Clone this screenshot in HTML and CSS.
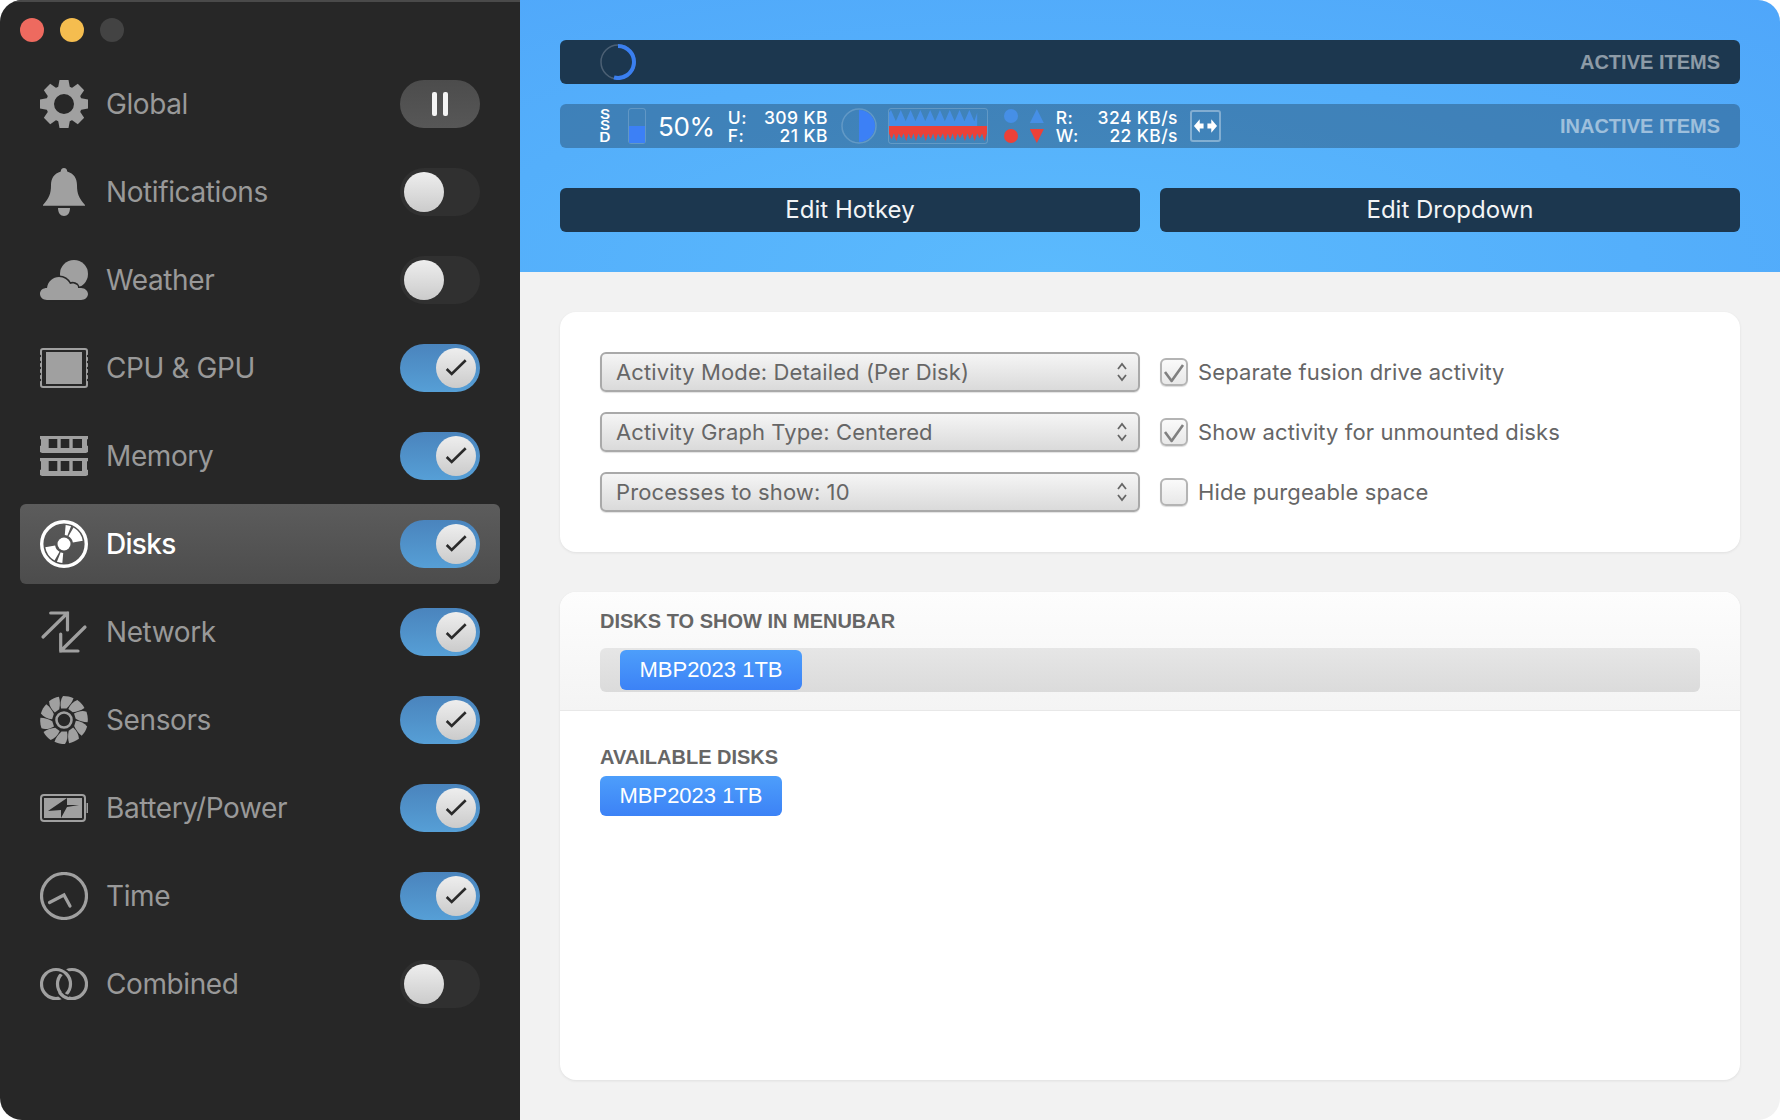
FILE: index.html
```html
<!DOCTYPE html>
<html lang="en">
<head>
    <meta charset="UTF-8">
    <title>Disks - Preferences</title>
    <link rel="stylesheet" href="styles.css">
</head>
<body>
<div class="window">
    <aside class="sidebar">
        <div class="traffic">
            <span class="light light-close"></span>
            <span class="light light-min"></span>
            <span class="light light-off"></span>
        </div>
        <nav class="nav">
            <div class="nav-item">
                <svg class="nav-icon" viewBox="0 0 48 48">
                    <defs><path id="tooth" d="M19.5 0h9l1.5 8h-12z"/></defs>
                    <circle cx="24" cy="24" r="14" fill="none" stroke="currentColor" stroke-width="8"/>
                    <use href="#tooth"/>
                    <use href="#tooth" transform="rotate(45 24 24)"/>
                    <use href="#tooth" transform="rotate(90 24 24)"/>
                    <use href="#tooth" transform="rotate(135 24 24)"/>
                    <use href="#tooth" transform="rotate(180 24 24)"/>
                    <use href="#tooth" transform="rotate(225 24 24)"/>
                    <use href="#tooth" transform="rotate(270 24 24)"/>
                    <use href="#tooth" transform="rotate(315 24 24)"/>
                </svg>
                <span class="nav-label">Global</span>
                <div class="pause"><span></span><span></span></div>
            </div>
            <div class="nav-item">
                <svg class="nav-icon" viewBox="0 0 48 48">
                    <path d="M24 0c-2 0-3.200 1.300-3.200 3.500C14 5.500 11 10.500 11 17c0 9-2 13-8 20l0 .8h42V37c-6-7-8-11-8-20 0-6.500-3-11.500-9.800-13.500C27.200 1.300 26 0 24 0z"/>
                    <path d="M18 40h12c0 5-2.500 8-6 8s-6-3-6-8z"/>
                </svg>
                <span class="nav-label">Notifications</span>
                <div class="toggle"><span class="knob"></span></div>
            </div>
            <div class="nav-item">
                <svg class="nav-icon" viewBox="0 0 48 48">
                    <circle cx="34" cy="18" r="14"/>
                    <path class="cloud" d="M7 44C3 44 0 41 0 38c0-4 3-6 7-6 1-7 6-11 12-11 5 0 9 3 11 7 2-1 5-.5 7 1 1 1 1 2 1 3h3c4 0 7 3 7 6s-3 6-7 6z"/>
                </svg>
                <span class="nav-label">Weather</span>
                <div class="toggle"><span class="knob"></span></div>
            </div>
            <div class="nav-item">
                <svg class="nav-icon" viewBox="0 0 48 48">
                    <rect x="1" y="5" width="46" height="38" rx="2" fill="none" stroke="currentColor" stroke-width="2"/>
                    <rect x="6" y="8" width="36" height="32"/>
                    <g class="notches">
                        <circle cx="0" cy="12" r="1.200"/><circle cx="0" cy="18" r="1.200"/><circle cx="0" cy="24" r="1.200"/><circle cx="0" cy="30" r="1.200"/><circle cx="0" cy="36" r="1.200"/>
                        <circle cx="48" cy="12" r="1.200"/><circle cx="48" cy="18" r="1.200"/><circle cx="48" cy="24" r="1.200"/><circle cx="48" cy="30" r="1.200"/><circle cx="48" cy="36" r="1.200"/>
                    </g>
                </svg>
                <span class="nav-label">CPU &amp; GPU</span>
                <div class="toggle toggle-on"><span class="knob"><svg viewBox="0 0 40 40"><path d="M10.700 21l5 5 14-13.700"/></svg></span></div>
            </div>
            <div class="nav-item">
                <svg class="nav-icon" viewBox="0 0 48 48">
                    <path fill-rule="evenodd" d="M0 4h48v3l-1 .5v6l1 .5v6l-2 1H2l-2-1v-6l1-.5v-6L0 7zM8.700 7v9h8.600V7zm12 0v9h8.600V7zm12 0v9H42V7z"/>
                    <path fill-rule="evenodd" d="M0 26h48v3l-1 .5v8l1 .5v5l-2 1H2l-2-1v-5l1-.5v-8L0 29zM8.700 29v10h8.600V29zm12 0v10h8.600V29zm12 0v10H42V29z"/>
                </svg>
                <span class="nav-label">Memory</span>
                <div class="toggle toggle-on"><span class="knob"><svg viewBox="0 0 40 40"><path d="M10.700 21l5 5 14-13.700"/></svg></span></div>
            </div>
            <div class="nav-item nav-item-active">
                <svg class="nav-icon" viewBox="0 0 48 48">
                    <circle cx="24" cy="24" r="22.300" fill="none" stroke="currentColor" stroke-width="3.400"/>
                    <circle cx="24" cy="24" r="14" fill="none" stroke="currentColor" stroke-width="10" pathLength="360" stroke-dasharray="17 8 50 105" transform="rotate(-85 24 24)"/>
                    <circle cx="24" cy="24" r="6.500"/>
                </svg>
                <span class="nav-label">Disks</span>
                <div class="toggle toggle-on"><span class="knob"><svg viewBox="0 0 40 40"><path d="M10.700 21l5 5 14-13.700"/></svg></span></div>
            </div>
            <div class="nav-item">
                <svg class="nav-icon nav-icon-line" viewBox="0 0 48 48">
                    <path d="M3 29L27.500 5M10.700 5h16.800v17M45 19L20.700 43M38 43H20.700V26"/>
                </svg>
                <span class="nav-label">Network</span>
                <div class="toggle toggle-on"><span class="knob"><svg viewBox="0 0 40 40"><path d="M10.700 21l5 5 14-13.700"/></svg></span></div>
            </div>
            <div class="nav-item">
                <svg class="nav-icon" viewBox="0 0 48 48">
                    <defs><path id="blade" d="M21 12.500C20 8 20.500 3.500 23 0c4 0 7.500.7 10.500 2.300-1.300 4-4 7.500-7 10.200z"/></defs>
                    <use href="#blade"/>
                    <use href="#blade" transform="rotate(36 24 24)"/>
                    <use href="#blade" transform="rotate(72 24 24)"/>
                    <use href="#blade" transform="rotate(108 24 24)"/>
                    <use href="#blade" transform="rotate(144 24 24)"/>
                    <use href="#blade" transform="rotate(180 24 24)"/>
                    <use href="#blade" transform="rotate(216 24 24)"/>
                    <use href="#blade" transform="rotate(252 24 24)"/>
                    <use href="#blade" transform="rotate(288 24 24)"/>
                    <use href="#blade" transform="rotate(324 24 24)"/>
                    <circle cx="24" cy="24" r="7.500" fill="none" stroke="currentColor" stroke-width="2.600"/>
                </svg>
                <span class="nav-label">Sensors</span>
                <div class="toggle toggle-on"><span class="knob"><svg viewBox="0 0 40 40"><path d="M10.700 21l5 5 14-13.700"/></svg></span></div>
            </div>
            <div class="nav-item">
                <svg class="nav-icon" viewBox="0 0 48 48">
                    <rect x="1" y="11" width="44" height="26" rx="3" fill="none" stroke="currentColor" stroke-width="2"/>
                    <rect x="46.500" y="19" width="1.500" height="10"/>
                    <path fill-rule="evenodd" d="M4 14h38v20H4zM39 21l-12 2-6 11v-8L8 27l19-13v7z"/>
                </svg>
                <span class="nav-label">Battery/Power</span>
                <div class="toggle toggle-on"><span class="knob"><svg viewBox="0 0 40 40"><path d="M10.700 21l5 5 14-13.700"/></svg></span></div>
            </div>
            <div class="nav-item">
                <svg class="nav-icon nav-icon-line" viewBox="0 0 48 48">
                    <circle cx="24" cy="24" r="22.500"/>
                    <path d="M9.500 30.500L24 23l6 11"/>
                </svg>
                <span class="nav-label">Time</span>
                <div class="toggle toggle-on"><span class="knob"><svg viewBox="0 0 40 40"><path d="M10.700 21l5 5 14-13.700"/></svg></span></div>
            </div>
            <div class="nav-item">
                <svg class="nav-icon nav-icon-line" viewBox="0 0 48 48">
                    <circle cx="32" cy="24" r="14.500"/>
                    <circle class="ring-cut" cx="16" cy="24" r="14.500"/>
                    <circle cx="16" cy="24" r="14.500"/>
                    <path class="ring-cut" d="M20 33A15 15 0 0 0 28 38.460"/>
                    <path d="M20 33A15 15 0 0 0 28 38.460"/>
                </svg>
                <span class="nav-label">Combined</span>
                <div class="toggle"><span class="knob"></span></div>
            </div>
        </nav>
    </aside>

    <main class="main">
        <section class="hero">
            <div class="bar bar-active">
                <svg class="spinner" viewBox="0 0 36 36">
                    <circle class="spinner-track" cx="18" cy="18" r="17"/>
                    <path class="spinner-arc" d="M18 2A16 16 0 1 1 14 33.500"/>
                </svg>
                <span class="bar-label">ACTIVE ITEMS</span>
            </div>
            <div class="bar bar-inactive">
                <span class="ssd">SSD</span>
                <div class="level"><div class="level-fill"></div></div>
                <span class="percent">50%</span>
                <div class="stats stats-disk">
                    <span>U:</span><span class="stat-num">309 KB</span>
                    <span>F:</span><span class="stat-num">21 KB</span>
                </div>
                <svg class="pie" viewBox="0 0 36 36">
                    <circle cx="18" cy="18" r="17"/>
                    <path d="M18 2a16 16 0 0 1 0 32z"/>
                </svg>
                <svg class="graph" viewBox="0 0 100 36" preserveAspectRatio="none">
                    <path class="graph-read" d="M0 18V4l2-3 5 12 5-12 5 12 5-12 5 12 5-12 5 12 5-12 5 12 5-12 5 12 5-12 5 12 5-12 5 12 5-12 5 12 3-9v14z"/>
                    <path class="graph-write" d="M0 18h100v8l-2.500 8-2.500-8-2.500 5-2.500-5-2.500 8-2.500-8-2.500 6-2.500-6-2.500 8-2.500-8-2.500 5-2.500-5-2.500 8-2.500-8-2.500 6-2.500-6-2.500 8-2.500-8-2.500 5-2.500-5-2.500 8-2.500-8-2.500 6-2.500-6-2.500 8-2.500-8-2.500 5-2.500-5-2.500 8-2.500-8-2.500 6-2.500-6-2.500 8-2.500-8-2.500 5-2.500-5-2.500 8-2.500-8-2.500 6-2.500-6-2.500 8-2.500-8-2.500 5-2.500-5z"/>
                </svg>
                <div class="io">
                    <span class="dot dot-read"></span>
                    <span class="tri tri-up"></span>
                    <span class="dot dot-write"></span>
                    <span class="tri tri-down"></span>
                </div>
                <div class="stats stats-io">
                    <span>R:</span><span class="stat-num">324 KB/s</span>
                    <span>W:</span><span class="stat-num">22 KB/s</span>
                </div>
                <div class="spacer-box">
                    <svg viewBox="0 0 26 26"><path d="M1 13l6-7v4.500h4v5H7V20zM25 13l-6-7v4.500h-4v5h4V20z"/></svg>
                </div>
                <span class="bar-label">INACTIVE ITEMS</span>
            </div>
            <div class="hero-buttons">
                <div class="hero-btn">Edit Hotkey</div>
                <div class="hero-btn">Edit Dropdown</div>
            </div>
        </section>

        <section class="content">
            <div class="card card-options">
                <div class="select">
                    <span>Activity Mode: Detailed (Per Disk)</span>
                    <svg viewBox="0 0 12 22"><path d="M2 8l4-5 4 5M2 14l4 5 4-5"/></svg>
                </div>
                <label class="check"><span class="box"><svg viewBox="0 0 20 20"><path d="M1 10l6.600 9L19 3"/></svg></span>Separate fusion drive activity</label>
                <div class="select">
                    <span>Activity Graph Type: Centered</span>
                    <svg viewBox="0 0 12 22"><path d="M2 8l4-5 4 5M2 14l4 5 4-5"/></svg>
                </div>
                <label class="check"><span class="box"><svg viewBox="0 0 20 20"><path d="M1 10l6.600 9L19 3"/></svg></span>Show activity for unmounted disks</label>
                <div class="select">
                    <span>Processes to show: 10</span>
                    <svg viewBox="0 0 12 22"><path d="M2 8l4-5 4 5M2 14l4 5 4-5"/></svg>
                </div>
                <label class="check"><span class="box"></span>Hide purgeable space</label>
            </div>

            <div class="card card-disks">
                <div class="disks-top">
                    <h3 class="disks-title">DISKS TO SHOW IN MENUBAR</h3>
                    <div class="dropzone"><span class="disk-tag">MBP2023 1TB</span></div>
                </div>
                <div class="disks-bottom">
                    <h3 class="disks-title">AVAILABLE DISKS</h3>
                    <span class="disk-tag">MBP2023 1TB</span>
                </div>
            </div>
        </section>
    </main>
</div>
</body>
</html>
```

FILE: styles.css
```css
/* ========= BASE ========= */
*{margin:0;padding:0;box-sizing:border-box;}
html,body{width:1780px;height:1120px;overflow:hidden;background:#fff;}
body{font-family:Inter,"Noto Sans",sans-serif;}

.window{
    display:flex;width:1780px;height:1120px;
    border-radius:22px;overflow:hidden;
}

/* ========= SIDEBAR ========= */
.sidebar{
    width:520px;flex-shrink:0;
    background:#272727;
    box-shadow:inset 0 2px 0 #4a4a4a;
}
.traffic{display:flex;gap:16px;padding:18px 0 0 20px;height:64px;}
.light{width:24px;height:24px;border-radius:50%;}
.light-close{background:#ee6a5f;}
.light-min{background:#f5bd4f;}
.light-off{background:#434343;}

.nav{display:flex;flex-direction:column;gap:8px;padding:0 20px;}
.nav-item{
    display:flex;align-items:center;
    height:80px;padding:0 20px;
    border-radius:6px;
    color:#a0a0a0;
}
.nav-item-active{
    color:#fff;
    background:linear-gradient(#5c5c5c,#4c4c4c);
}
.nav-icon{width:48px;height:48px;flex-shrink:0;fill:currentColor;}
.nav-icon-line{fill:none;stroke:currentColor;stroke-width:3.2;stroke-linecap:round;stroke-linejoin:miter;}
.cloud{stroke:#272727;stroke-width:3;paint-order:stroke;}
.notches{fill:#272727;}
.ring-cut{stroke:#272727;stroke-width:7;stroke-linecap:butt;}
.nav-label{flex:1;margin-left:18px;font-size:28px;letter-spacing:-.4px;color:#999;}
.nav-item-active .nav-label{color:#fff;font-weight:500;letter-spacing:-.7px;}

/* ========= TOGGLES ========= */
.toggle{
    display:flex;align-items:center;
    width:80px;height:48px;padding:4px;
    border-radius:24px;
    background:#303030;
}
.toggle-on{
    justify-content:flex-end;
    background:linear-gradient(#4a84bd,#569fd6);
}
.knob{
    display:block;width:40px;height:40px;border-radius:50%;
    background:linear-gradient(#eeeeee,#cbcbcb);
}
.knob svg{display:block;width:40px;height:40px;fill:none;stroke:#2a2a2a;stroke-width:2.600;}
.pause{
    display:flex;justify-content:center;align-items:center;gap:6px;
    width:80px;height:48px;border-radius:24px;
    background:linear-gradient(#4c4c4c,#575757);
}
.pause span{width:5px;height:24px;border-radius:2px;background:#f4f4f4;}

/* ========= HERO ========= */
.main{flex:1;display:flex;flex-direction:column;background:#f2f2f2;}
.hero{
    height:272px;padding:40px 40px 0;
    background:radial-gradient(ellipse 85% 140% at 42% 100%,#5bbafd 0%,#54affb 55%,#4fa6fa 100%);
}
.bar{
    display:flex;align-items:center;
    height:44px;padding:0 20px 0 40px;
    border-radius:6px;
}
.bar-active{background:#1c374f;}
.bar-inactive{
    margin-top:20px;color:#fff;
    background:rgba(28,55,79,.38);
}
.bar-label{
    margin-left:auto;
    font-family:"Liberation Sans",Arial,sans-serif;
    font-size:20px;font-weight:700;
    color:rgba(255,255,255,.5);
}
.spinner{width:36px;height:36px;fill:none;}
.spinner-track{stroke:#4c6074;stroke-width:1.500;}
.spinner-arc{stroke:#3a7ff0;stroke-width:4;}

/* ========= MENUBAR ITEMS ========= */
.ssd{
    display:block;width:10px;
    font-size:13px;font-weight:600;line-height:11.500px;text-align:center;
    word-break:break-all;
    transform:scaleX(1.2);
}
.level{
    display:flex;align-items:flex-end;
    width:18px;height:36px;margin-left:18px;
    border:1.500px solid rgba(255,255,255,.18);border-radius:3px;
}
.level-fill{width:100%;height:50%;background:#3c80f6;}
.percent{margin-left:12px;font-size:26px;letter-spacing:-.3px;}
.stats{
    display:grid;grid-template-columns:auto 1fr;
    padding-top:1px;
    font-size:17.500px;line-height:18px;font-weight:500;letter-spacing:.4px;
}
.stat-num{text-align:right;white-space:nowrap;}
.stats-disk{width:100px;margin-left:13px;}
.pie{width:36px;height:36px;margin-left:13px;}
.pie circle{fill:none;stroke:rgba(255,255,255,.18);stroke-width:1.500;}
.pie path{fill:#3c80f6;}
.graph{
    width:100px;height:36px;margin-left:11px;
    border:1.500px solid rgba(255,255,255,.18);border-radius:3px;
}
.graph-read{fill:#468fe6;}
.graph-write{fill:#ec4138;}
.io{
    display:grid;grid-template-columns:14px 14px;column-gap:12px;row-gap:6px;
    margin-left:16px;
}
.dot{width:14px;height:14px;border-radius:50%;}
.dot-read{background:#468fe6;}
.dot-write{background:#ec4138;}
.tri{width:14px;height:14px;}
.tri-up{background:#468fe6;clip-path:polygon(50% 0,100% 100%,0 100%);}
.tri-down{background:#ec4138;clip-path:polygon(0 0,100% 0,50% 100%);}
.stats-io{width:122px;margin-left:12px;}
.spacer-box{
    width:31px;height:32px;margin-left:12px;padding:1px;
    border:2px solid rgba(255,255,255,.35);border-radius:3px;
}
.spacer-box svg{display:block;width:25px;height:26px;fill:#fff;}

/* ========= HERO BUTTONS ========= */
.hero-buttons{display:grid;grid-template-columns:1fr 1fr;gap:20px;margin-top:40px;}
.hero-btn{
    height:44px;line-height:44px;text-align:center;
    border-radius:6px;background:#1c374f;
    color:#f2f4f6;font-size:24px;
}

/* ========= CARDS ========= */
.content{
    flex:1;display:flex;flex-direction:column;gap:40px;
    padding:40px;
}
.card{
    background:#fff;border-radius:16px;
    box-shadow:0 1px 3px rgba(0,0,0,.08);
}
.card-options{
    display:grid;grid-template-columns:540px 1fr;
    column-gap:20px;row-gap:20px;align-items:center;
    height:240px;padding:40px;
}
.select{
    display:flex;align-items:center;justify-content:space-between;
    height:40px;padding:0 10px 0 14px;
    border:2px solid #a9a9a9;border-radius:6px;
    background:linear-gradient(#f5f5f5,#dadada);
    box-shadow:0 1px 1px rgba(0,0,0,.12);
    color:#666;font-size:22px;letter-spacing:.1px;
}
.select svg{width:12px;height:22px;fill:none;stroke:#666;stroke-width:1.800;}
.check{display:flex;align-items:center;gap:10px;color:#666;font-size:22px;letter-spacing:.1px;}
.box{
    width:28px;height:28px;padding:2px;flex-shrink:0;
    border:2px solid #b4b4b4;border-radius:6px;
    background:linear-gradient(#fafafa,#e8e8e8);
    box-shadow:0 1px 1px rgba(0,0,0,.14);
}
.box svg{display:block;width:20px;height:20px;overflow:visible;fill:none;stroke:#808080;stroke-width:2.600;stroke-linejoin:round;}

/* ========= DISKS ========= */
.card-disks{flex:1;overflow:hidden;}
.disks-top{
    height:119px;padding:18px 40px 0;
    background:linear-gradient(#fdfdfd,#f4f4f4);
    border-bottom:1px solid #e8e8e8;
}
.disks-title{
    font-family:"Liberation Sans",Arial,sans-serif;
    font-size:20px;font-weight:700;line-height:22px;
    color:#666;
}
.dropzone{
    display:flex;align-items:center;
    height:44px;margin-top:16px;padding-left:20px;
    border-radius:6px;
    background:linear-gradient(#e6e6e6,#dbdbdb);
}
.disk-tag{
    display:block;width:182px;height:40px;line-height:40px;text-align:center;
    border-radius:6px;
    background:linear-gradient(#4d9efb,#3c82f6);
    color:#fff;font-family:"Liberation Sans",Arial,sans-serif;font-size:22px;
}
.disks-bottom{padding:35px 40px 0;}
.disks-bottom .disk-tag{margin-top:8px;}
```
